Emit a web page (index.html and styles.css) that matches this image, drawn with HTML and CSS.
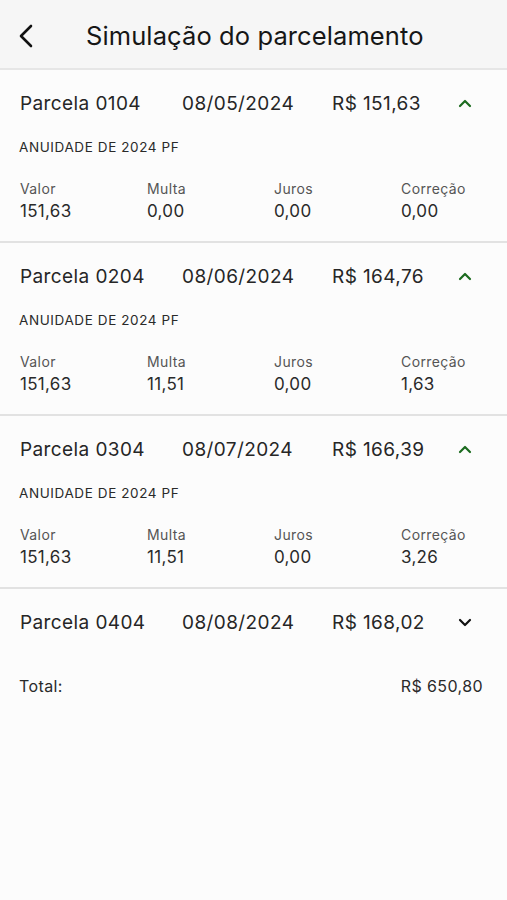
FILE: index.html
```html
<!DOCTYPE html>
<html lang="pt-BR">
<head>
    <meta charset="UTF-8">
    <meta name="viewport" content="width=device-width, initial-scale=1.0">
    <title>Simulação do parcelamento</title>
    <link rel="stylesheet" href="styles.css">
</head>
<body>
    <header class="topbar">
        <button class="back" aria-label="Voltar">
            <svg width="16" height="24" viewBox="0 0 16 24"><path d="M13 2 L3 12 L13 22" fill="none" stroke="#111" stroke-width="2.6" stroke-linecap="round" stroke-linejoin="round"/></svg>
        </button>
        <h1>Simulação do parcelamento</h1>
    </header>

    <main>
        <!-- Parcela 1 -->
        <section class="parcela open">
            <div class="head">
                <span class="num">Parcela 0104</span>
                <span class="date">08/05/2024</span>
                <span class="amount">R$ 151,63</span>
                <svg class="chev" width="14" height="10" viewBox="0 0 14 10"><path d="M2 8 L7 3 L12 8" fill="none" stroke="#1c6b1f" stroke-width="2.2" stroke-linecap="round" stroke-linejoin="round"/></svg>
            </div>
            <p class="desc">ANUIDADE DE 2024 PF</p>
            <div class="values">
                <div><span class="label">Valor</span><span class="val">151,63</span></div>
                <div><span class="label">Multa</span><span class="val">0,00</span></div>
                <div><span class="label">Juros</span><span class="val">0,00</span></div>
                <div><span class="label">Correção</span><span class="val">0,00</span></div>
            </div>
        </section>

        <!-- Parcela 2 -->
        <section class="parcela open">
            <div class="head">
                <span class="num">Parcela 0204</span>
                <span class="date">08/06/2024</span>
                <span class="amount">R$ 164,76</span>
                <svg class="chev" width="14" height="10" viewBox="0 0 14 10"><path d="M2 8 L7 3 L12 8" fill="none" stroke="#1c6b1f" stroke-width="2.2" stroke-linecap="round" stroke-linejoin="round"/></svg>
            </div>
            <p class="desc">ANUIDADE DE 2024 PF</p>
            <div class="values">
                <div><span class="label">Valor</span><span class="val">151,63</span></div>
                <div><span class="label">Multa</span><span class="val">11,51</span></div>
                <div><span class="label">Juros</span><span class="val">0,00</span></div>
                <div><span class="label">Correção</span><span class="val">1,63</span></div>
            </div>
        </section>

        <!-- Parcela 3 -->
        <section class="parcela open">
            <div class="head">
                <span class="num">Parcela 0304</span>
                <span class="date">08/07/2024</span>
                <span class="amount">R$ 166,39</span>
                <svg class="chev" width="14" height="10" viewBox="0 0 14 10"><path d="M2 8 L7 3 L12 8" fill="none" stroke="#1c6b1f" stroke-width="2.2" stroke-linecap="round" stroke-linejoin="round"/></svg>
            </div>
            <p class="desc">ANUIDADE DE 2024 PF</p>
            <div class="values">
                <div><span class="label">Valor</span><span class="val">151,63</span></div>
                <div><span class="label">Multa</span><span class="val">11,51</span></div>
                <div><span class="label">Juros</span><span class="val">0,00</span></div>
                <div><span class="label">Correção</span><span class="val">3,26</span></div>
            </div>
        </section>

        <!-- Parcela 4 -->
        <section class="parcela closed">
            <div class="head">
                <span class="num">Parcela 0404</span>
                <span class="date">08/08/2024</span>
                <span class="amount">R$ 168,02</span>
                <svg class="chev" width="14" height="10" viewBox="0 0 14 10"><path d="M2 3 L7 8 L12 3" fill="none" stroke="#111" stroke-width="2.2" stroke-linecap="round" stroke-linejoin="round"/></svg>
            </div>
        </section>

        <div class="total">
            <span>Total:</span>
            <span>R$ 650,80</span>
        </div>
    </main>
</body>
</html>
```

FILE: styles.css
```css
body {
    margin: 0;
    background-color: #fcfcfc;
    color: #222;
    font-family: Inter, "Liberation Sans", sans-serif;
}
.topbar {
    box-sizing: border-box;
    height: 70px;
    padding-top: 3px;
    display: flex;
    align-items: center;
    background-color: #f6f6f6;
    border-bottom: 2px solid #e6e6e6;
}
.back {
    width: 86px;
    padding: 0 0 0 18px;
    display: flex;
    align-items: center;
    background: none;
    border: none;
}
.topbar h1 {
    margin: 0;
    font-size: 25.5px;
    font-weight: 400;
    letter-spacing: 0.1px;
    color: #161616;
}
.parcela {
    height: 171px;
    border-bottom: 2px solid #e2e2e2;
}
.parcela.closed {
    height: 70px;
    border-bottom: none;
}
.head {
    height: 66px;
    display: flex;
    align-items: center;
    padding-left: 20px;
    font-size: 19px;
    letter-spacing: 0.4px;
    color: #262626;
}
.num { width: 162px; }
.date { width: 150px; }
.amount { width: 126px; }
.desc {
    margin: 3px 0 0 19px;
    font-size: 13.5px;
    letter-spacing: 0.6px;
    color: #2a2a2a;
}
.values {
    margin-top: 25px;
    padding-left: 20px;
    display: grid;
    grid-template-columns: repeat(4, 127px);
}
.values div {
    display: flex;
    flex-direction: column;
    gap: 4px;
}
.label {
    font-size: 14px;
    letter-spacing: 0.4px;
    color: #555;
}
.val {
    font-size: 17px;
    letter-spacing: 0.3px;
    color: #2a2a2a;
}
.total {
    display: flex;
    justify-content: space-between;
    padding: 17px 24px 0 19px;
    font-size: 16px;
    letter-spacing: 0.4px;
    color: #2a2a2a;
}
```
